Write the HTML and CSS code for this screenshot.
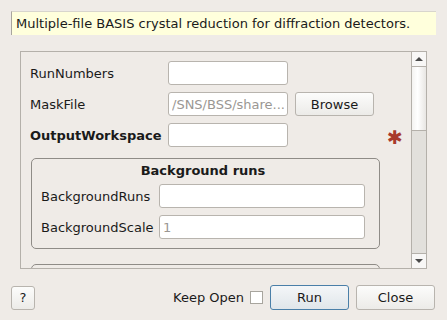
FILE: index.html
```html
<!DOCTYPE html>
<html lang="en">
<head>
    <meta charset="UTF-8">
    <title>BASISCrystalDiffraction</title>
    <link rel="stylesheet" href="styles.css">
</head>
<body>
    <div class="dialog">
        <div class="summary">Multiple-file BASIS crystal reduction for diffraction detectors.</div>

        <div class="scroll-frame">
            <div class="scroll-content">
                <div class="prop-grid">
                    <label class="prop-label">RunNumbers</label>
                    <input class="field" type="text">
                    <span></span>
                    <span></span>

                    <label class="prop-label">MaskFile</label>
                    <input class="field" type="text" placeholder="/SNS/BSS/share...">
                    <button class="btn browse">Browse</button>
                    <span></span>

                    <label class="prop-label required">OutputWorkspace</label>
                    <input class="field" type="text">
                    <span></span>
                    <span class="star">&#x2731;</span>
                </div>

                <div class="group">
                    <div class="group-title">Background runs</div>
                    <div class="group-grid">
                        <label class="prop-label">BackgroundRuns</label>
                        <input class="field" type="text">
                        <label class="prop-label">BackgroundScale</label>
                        <input class="field" type="text" placeholder="1">
                    </div>
                </div>

                <div class="group next"></div>
            </div>
            <div class="scrollbar">
                <div class="arrow up"><span></span></div>
                <div class="handle"></div>
                <div class="track"></div>
                <div class="arrow down"><span></span></div>
            </div>
        </div>

        <div class="footer">
            <button class="btn help">?</button>
            <div class="spacer"></div>
            <label class="keep-open">Keep Open <span class="check"></span></label>
            <button class="btn run">Run</button>
            <button class="btn close">Close</button>
        </div>
    </div>
</body>
</html>
```

FILE: styles.css
```css
body {
    margin: 0;
    background-color: #efebe7;
    font-family: "DejaVu Sans", sans-serif;
    font-size: 13px;
    color: #1a1a1a;
}

.dialog {
    width: 447px;
    height: 320px;
    padding-top: 11px;
    box-sizing: border-box;
}

.summary {
    margin: 0 11px;
    height: 24px;
    line-height: 24px;
    padding-left: 4px;
    background-color: #ffffdc;
    border-left: 1px solid #a8a59e;
    border-top: 1px solid #d8d5cd;
    box-sizing: border-box;
    white-space: nowrap;
}

.scroll-frame {
    margin: 16px 0 0 20px;
    width: 407px;
    height: 218px;
    border: 1px solid #b4b0aa;
    box-sizing: border-box;
    display: flex;
}

.scroll-content {
    flex: 1;
    overflow: hidden;
    padding: 9px 0 0 9px;
}

.prop-grid {
    display: grid;
    grid-template-columns: 138px 120px 86px 1fr;
    row-gap: 7px;
    align-items: center;
}

.prop-label {
    white-space: nowrap;
}

.required {
    font-weight: bold;
}

.field {
    height: 24px;
    box-sizing: border-box;
    border: 1px solid #b8b4ae;
    border-radius: 3px;
    background-color: #ffffff;
    font-family: inherit;
    font-size: 13px;
    padding: 0 3px;
    color: #1a1a1a;
    min-width: 0;
    width: 100%;
}

.field::placeholder {
    color: #9a9793;
}

.btn {
    height: 24px;
    box-sizing: border-box;
    border: 1px solid #b8b4ae;
    border-radius: 3px;
    background: linear-gradient(#fcfcfb, #ecebe8);
    font-family: inherit;
    font-size: 13px;
    color: #1a1a1a;
    padding: 0;
}

.browse {
    width: 79px;
    margin-left: 7px;
}

.star {
    color: #a83a2c;
    font-size: 19px;
    line-height: 20px;
    padding: 3px 0 0 13px;
}

.group {
    margin: 11px 0 0 1px;
    width: 349px;
    height: 91px;
    box-sizing: border-box;
    border: 1px solid #8f8c87;
    border-radius: 5px;
    padding: 4px 14px 0 9px;
}

.group-title {
    text-align: center;
    font-weight: bold;
    height: 21px;
    line-height: 16px;
}

.group-grid {
    display: grid;
    grid-template-columns: 118px 1fr;
    row-gap: 7px;
    align-items: center;
}

.group.next {
    margin-top: 15px;
    height: 30px;
}

.scrollbar {
    width: 14px;
    border-left: 1px solid #b4b0aa;
    display: flex;
    flex-direction: column;
}

.arrow {
    height: 14px;
    background-color: #f8f7f6;
    display: flex;
    align-items: center;
    justify-content: center;
}

.arrow.up {
    border-bottom: 1px solid #b4b0aa;
}

.arrow.down {
    border-top: 1px solid #b4b0aa;
}

.arrow span {
    width: 0;
    height: 0;
    border-left: 4px solid transparent;
    border-right: 4px solid transparent;
}

.up span {
    border-bottom: 4px solid #4a4a4a;
}

.down span {
    border-top: 4px solid #4a4a4a;
}

.handle {
    height: 63px;
    background: linear-gradient(to right, #f4f3f1, #ffffff 40%, #e8e6e3);
    border-bottom: 1px solid #b4b0aa;
}

.track {
    flex: 1;
    background-color: #e2e0dc;
}

.footer {
    display: flex;
    align-items: center;
    margin: 16px 12px 0 11px;
    height: 25px;
}

.help {
    width: 24px;
    height: 24px;
}

.spacer {
    flex: 1;
}

.keep-open {
    display: flex;
    align-items: center;
    gap: 6px;
    margin-right: 7px;
}

.check {
    width: 13px;
    height: 13px;
    box-sizing: border-box;
    border: 1px solid #a8a59e;
    background-color: #ffffff;
}

.run {
    width: 79px;
    height: 25px;
    border-color: #4a7fa8;
    background: linear-gradient(#f4f6f8, #e0e6ea);
    margin-right: 7px;
}

.close {
    width: 79px;
    height: 25px;
}
```
